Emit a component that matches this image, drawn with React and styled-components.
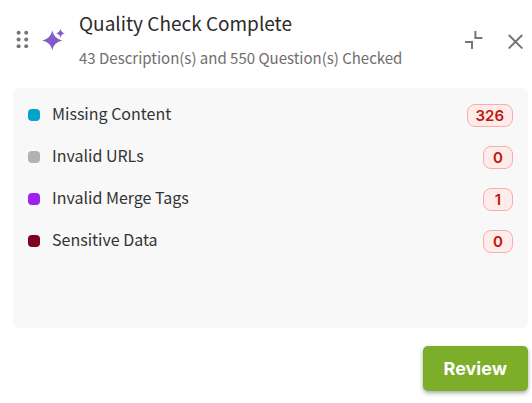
import React from "react";
import styled, { createGlobalStyle } from "styled-components";

const GlobalStyle = createGlobalStyle`
  * {
    box-sizing: border-box;
  }
  body {
    margin: 0;
    background: #fff;
    color: #2b2b2b;
    font-family: "Noto Sans CJK SC", "Noto Sans", sans-serif;
  }
`;
const Panel = styled.section`
  display: flex;
  flex-direction: column;
  padding: 8px 4px 12px 13px;
`;
const Header = styled.header`
  display: flex;
  align-items: center;
  height: 64px;
  margin-bottom: 16px;
`;
const IconButton = styled.button`
  display: flex;
  flex: none;
  padding: 0;
  border: none;
  background: none;
  color: #757575;
  cursor: ${(props) => (props.$drag ? "grab" : "pointer")};
`;
const Sparkle = styled.svg`
  flex: none;
  margin: 0 13px 0 10px;
`;
const Heading = styled.div`
  flex: 1;
  min-width: 0;
`;
const Title = styled.h1`
  margin: 0 0 6px;
  font-size: 19px;
  font-weight: 400;
  line-height: 30px;
`;
const Subtitle = styled.p`
  margin: 0;
  color: #6e6e6e;
  font-size: 15px;
  line-height: 28px;
`;
const Actions = styled.div`
  display: flex;
  align-items: center;
  gap: 24px;
`;
const List = styled.ul`
  min-height: 240px;
  margin: 0 0 18px;
  padding: 6px 15px;
  border-radius: 6px;
  background: #f8f8f8;
  list-style: none;
`;
const Item = styled.li`
  display: flex;
  align-items: center;
  height: 42px;
`;
const Swatch = styled.span`
  width: 12px;
  height: 12px;
  margin-right: 12px;
  border-radius: 4px;
  background: ${(props) => props.$color};
`;
const Label = styled.span`
  flex: 1;
  padding-bottom: 4px;
  color: #333;
  font-size: 16px;
  line-height: 24px;
`;
const Count = styled.span`
  min-width: 30px;
  padding: 0 8px;
  border: 1px solid #f3b0ab;
  border-radius: 8px;
  background: #ffebe9;
  color: #c01808;
  font-family: Inter, sans-serif;
  font-size: 15px;
  font-weight: 600;
  line-height: 21px;
  text-align: center;
`;
const ReviewButton = styled.button`
  align-self: flex-end;
  padding: 0 21px;
  border: none;
  border-radius: 5px;
  background: #7cae2a;
  box-shadow: 0 2px 4px rgba(0, 0, 0, 0.35);
  color: #fff;
  font-family: Inter, sans-serif;
  font-size: 18px;
  font-weight: 700;
  line-height: 45px;
  cursor: pointer;
`;

const checks = [
  { name: "Missing Content", color: "#00a3cc", count: 326 },
  { name: "Invalid URLs", color: "#b2b2b2", count: 0 },
  { name: "Invalid Merge Tags", color: "#a020f0", count: 1 },
  { name: "Sensitive Data", color: "#800020", count: 0 },
];

const App = () => (
  <>
    <GlobalStyle />
    <Panel>
      <Header>
        <IconButton type="button" aria-label="Move panel" $drag>
          <svg width="19" height="24" viewBox="0 0 19 24" fill="currentColor">
            {[4.8, 11.6, 18.2].map((y) => (
              <React.Fragment key={y}>
                <circle cx="5.6" cy={y} r="2" />
                <circle cx="13.2" cy={y} r="2" />
              </React.Fragment>
            ))}
          </svg>
        </IconButton>
        <Sparkle width="24" height="24" viewBox="0 0 24 24" fill="#8459cb">
          <path d="M10.3 2.4Q12 10.7 20.3 12.4Q12 14.1 10.3 22.2Q8.6 14.1 0.3 12.4Q8.6 10.7 10.3 2.4Z" />
          <path d="M18.4 0.7Q19.1 4.5 22.9 5.2Q19.1 5.9 18.4 9.7Q17.7 5.9 13.9 5.2Q17.7 4.5 18.4 0.7Z" />
        </Sparkle>
        <Heading>
          <Title>Quality Check Complete</Title>
          <Subtitle>43 Description(s) and 550 Question(s) Checked</Subtitle>
        </Heading>
        <Actions>
          <IconButton type="button" aria-label="Collapse">
            <svg
              width="20"
              height="20"
              viewBox="0 0 20 20"
              fill="none"
              stroke="currentColor"
              strokeWidth="2"
            >
              <path d="M11.4 1V8H18.4M1 12H8V19" />
            </svg>
          </IconButton>
          <IconButton type="button" aria-label="Close">
            <svg
              width="20"
              height="20"
              viewBox="0 0 20 20"
              fill="none"
              stroke="currentColor"
              strokeWidth="2"
              strokeLinecap="round"
            >
              <path d="M1.3 5.5L13.7 17.9M13.7 5.5L1.3 17.9" />
            </svg>
          </IconButton>
        </Actions>
      </Header>
      <List>
        {checks.map((check) => (
          <Item key={check.name}>
            <Swatch $color={check.color} />
            <Label>{check.name}</Label>
            <Count>{check.count}</Count>
          </Item>
        ))}
      </List>
      <ReviewButton type="button">Review</ReviewButton>
    </Panel>
  </>
);

export default App;
